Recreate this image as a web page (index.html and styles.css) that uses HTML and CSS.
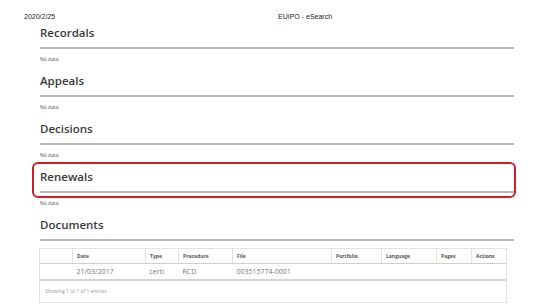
FILE: index.html
```html
<!DOCTYPE html>
<html lang="en">
<head>
    <meta charset="UTF-8">
    <meta name="viewport" content="width=device-width, initial-scale=1.0">
    <title>EUIPO - eSearch</title>
    <link rel="stylesheet" href="styles.css">
</head>
<body>

    <div class="print-header">
        <span class="print-date">2020/2/25</span>
        <span class="print-title">EUIPO - eSearch</span>
    </div>

    <div id="content">
        <div class="section">
            <h2>Recordals</h2>
            <p class="no-data">No data</p>
        </div>

        <div class="section">
            <h2>Appeals</h2>
            <p class="no-data">No data</p>
        </div>

        <div class="section">
            <h2>Decisions</h2>
            <p class="no-data">No data</p>
        </div>

        <div class="section">
            <div class="marked">
                <h2>Renewals</h2>
                <div class="highlight"></div>
            </div>
            <p class="no-data">No data</p>
        </div>

        <div class="section">
            <h2>Documents</h2>
            <div class="table-box">
                <table>
                    <thead>
                        <tr>
                            <th class="col-check"></th>
                            <th class="col-date">Date</th>
                            <th class="col-type">Type</th>
                            <th class="col-proc">Procedure</th>
                            <th class="col-file">File</th>
                            <th class="col-port">Portfolio</th>
                            <th class="col-lang">Language</th>
                            <th class="col-pages">Pages</th>
                            <th>Actions</th>
                        </tr>
                    </thead>
                    <tbody>
                        <tr>
                            <td></td>
                            <td>21/03/2017</td>
                            <td>certi</td>
                            <td>RCD</td>
                            <td>003515774-0001</td>
                            <td></td>
                            <td></td>
                            <td></td>
                            <td></td>
                        </tr>
                    </tbody>
                </table>
                <div class="table-info">Showing 1 to 1 of 1 entries</div>
            </div>
        </div>
    </div>

</body>
</html>
```

FILE: styles.css
```css
body {
    font-family: "Open Sans", sans-serif;
    margin: 0;
    padding: 0;
    background: #fff;
    color: #333;
}

.print-header {
    display: flex;
    padding: 12px 0 0 24px;
    height: 9px;
    font-family: "Liberation Sans", Arial, sans-serif;
    font-size: 7px;
    line-height: 9px;
    color: #222;
}

.print-date {
    width: 254px;
}

#content {
    margin: 4px 40px 0 40px;
}

.section h2 {
    margin: 0;
    padding-bottom: 6px;
    font-size: 11.5px;
    font-weight: 600;
    line-height: 16px;
    color: #3a3a3a;
    border-bottom: 2px solid #b8b8b8;
}

.no-data {
    margin: 6px 0 10px 0;
    font-size: 5px;
    line-height: 8px;
    color: #555;
}

.marked {
    position: relative;
}

.highlight {
    position: absolute;
    top: -7px;
    left: -8px;
    right: -2px;
    bottom: -5px;
    border: 2px solid #cc1f2a;
    border-radius: 6px;
}

.table-box {
    margin: 7px 7px 0 -1px;
    border: 1px solid #e2e2e2;
}

table {
    width: 100%;
    border-collapse: collapse;
    table-layout: fixed;
}

th {
    height: 14px;
    padding: 0 0 0 4px;
    font-size: 5px;
    font-weight: 700;
    text-align: left;
    color: #555;
    border-left: 1px solid #e2e2e2;
    border-bottom: 1px solid #cfcfcf;
}

th:first-child {
    border-left: none;
}

td {
    height: 15px;
    padding: 0 0 0 4px;
    font-size: 7px;
    color: #777;
    white-space: nowrap;
    border-bottom: 2px solid #d4d4d4;
}

.col-check { width: 28px; }
.col-date { width: 68px; }
.col-type { width: 28px; }
.col-proc { width: 49px; }
.col-file { width: 94px; }
.col-port { width: 45px; }
.col-lang { width: 50px; }
.col-pages { width: 30px; }

.table-info {
    height: 21px;
    padding-left: 5px;
    font-size: 5px;
    line-height: 21px;
    color: #999;
}
```
